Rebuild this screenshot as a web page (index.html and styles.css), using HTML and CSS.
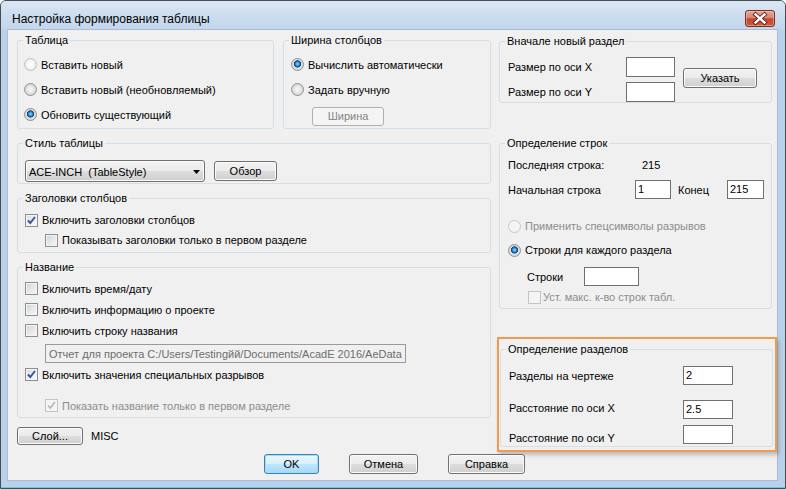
FILE: index.html
```html
<!DOCTYPE html>
<html lang="ru">
<head>
<meta charset="utf-8">
<title>Настройка формирования таблицы</title>
<link rel="stylesheet" href="styles.css">
</head>
<body>
<div class="window">
  <div class="titlebar">
    <span class="title">Настройка формирования таблицы</span>
    <button class="close" aria-label="Закрыть">
      <svg width="30" height="17" viewBox="0 0 30 17">
        <path d="M10.5 4.5 L19.5 12.5 M19.5 4.5 L10.5 12.5" stroke="#5b1f14" stroke-width="4.2" stroke-linecap="square" fill="none"/>
        <path d="M10.5 4.5 L19.5 12.5 M19.5 4.5 L10.5 12.5" stroke="#ffffff" stroke-width="2.4" stroke-linecap="square" fill="none"/>
      </svg>
    </button>
  </div>
  <div class="client">
    <div class="col-left">
      <div class="row-top">
        <fieldset class="grp g-table">
          <legend>Таблица</legend>
          <div class="gb">
            <div class="opt row25"><span class="radio light"></span>Вставить новый</div>
            <div class="opt row25"><span class="radio"></span>Вставить новый (необновляемый)</div>
            <div class="opt row25"><span class="radio on"></span>Обновить существующий</div>
          </div>
        </fieldset>
        <fieldset class="grp g-width">
          <legend>Ширина столбцов</legend>
          <div class="gb">
            <div class="opt row25"><span class="radio on"></span>Вычислить автоматически</div>
            <div class="opt row25"><span class="radio"></span>Задать вручную</div>
            <button class="btn disabled btn-width">Ширина</button>
          </div>
        </fieldset>
      </div>
      <fieldset class="grp g-style">
        <legend>Стиль таблицы</legend>
        <div class="gb style-row">
          <div class="combo"><span class="combo-text">ACE-INCH&nbsp; (TableStyle)</span><svg class="arrow" width="7" height="4" viewBox="0 0 7 4"><polygon points="0,0 7,0 3.5,4" fill="#000"/></svg></div>
          <button class="btn btn-browse">Обзор</button>
        </div>
      </fieldset>
      <fieldset class="grp g-headers">
        <legend>Заголовки столбцов</legend>
        <div class="gb">
          <div class="opt row20"><span class="check on"><svg width="11" height="11" viewBox="0 0 11 11"><path d="M2 5.5 L4.3 8 L9 2" stroke="#3d539a" stroke-width="2" fill="none"/></svg></span>Включить заголовки столбцов</div>
          <div class="opt row20 indent"><span class="check"></span>Показывать заголовки только в первом разделе</div>
        </div>
      </fieldset>
      <fieldset class="grp g-name">
        <legend>Название</legend>
        <div class="gb">
          <div class="opt row21"><span class="check"></span>Включить время/дату</div>
          <div class="opt row21"><span class="check"></span>Включить информацию о проекте</div>
          <div class="opt row21"><span class="check"></span>Включить строку названия</div>
          <div class="field disabled title-field">Отчет для проекта C:/Users/Testingйй/Documents/AcadE 2016/AeData</div>
          <div class="opt row21 after-field"><span class="check on"><svg width="11" height="11" viewBox="0 0 11 11"><path d="M2 5.5 L4.3 8 L9 2" stroke="#3d539a" stroke-width="2" fill="none"/></svg></span>Включить значения специальных разрывов</div>
          <div class="opt row21 indent dim first-only"><span class="check off"><svg width="11" height="11" viewBox="0 0 11 11"><path d="M2 5.5 L4.3 8 L9 2" stroke="#b4b4b4" stroke-width="1.6" fill="none"/></svg></span>Показать название только в первом разделе</div>
        </div>
      </fieldset>
      <div class="layer-row">
        <button class="btn btn-layer">Слой...</button>
        <span class="misc">MISC</span>
      </div>
    </div>

    <div class="col-right">
      <fieldset class="grp g-new">
        <legend>Вначале новый раздел</legend>
        <div class="gb new-row">
          <div class="size-grid">
            <span class="lbl">Размер по оси X</span><span class="field w49"></span>
            <span class="lbl">Размер по оси Y</span><span class="field w49"></span>
          </div>
          <button class="btn btn-pick">Указать</button>
        </div>
      </fieldset>
      <fieldset class="grp g-rows">
        <legend>Определение строк</legend>
        <div class="gb">
          <div class="line last-row"><span class="lbl-last">Последняя строка:</span><span>215</span></div>
          <div class="line start-row"><span class="lbl-start">Начальная строка</span><span class="field w36">1</span><span class="lbl-end">Конец</span><span class="field w37">215</span></div>
          <div class="opt row24 gap-top dim"><span class="radio off"></span>Применить спецсимволы разрывов</div>
          <div class="opt row24"><span class="radio on"></span>Строки для каждого раздела</div>
          <div class="line strings-row"><span class="lbl-strings">Строки</span><span class="field w55"></span></div>
          <div class="opt max-row dim"><span class="check off"></span>Уст. макс. к-во строк табл.</div>
        </div>
      </fieldset>
      <div class="highlight">
        <fieldset class="grp g-sect">
          <legend>Определение разделов</legend>
          <div class="gb">
            <div class="line sect-row r1"><span class="lbl-sect">Разделы на чертеже</span><span class="field w50">2</span></div>
            <div class="line sect-row r2"><span class="lbl-sect up">Расстояние по оси X</span><span class="field w50">2.5</span></div>
            <div class="line sect-row r3"><span class="lbl-sect down">Расстояние по оси Y</span><span class="field w50"></span></div>
          </div>
        </fieldset>
      </div>
    </div>

    <div class="actions">
      <button class="btn default btn-ok">OK</button>
      <button class="btn btn-cancel">Отмена</button>
      <button class="btn btn-help">Справка</button>
    </div>
  </div>
</div>
</body>
</html>
```

FILE: styles.css
```css
* { box-sizing: border-box; }
html, body { margin: 0; padding: 0; }
body {
  width: 786px;
  height: 489px;
  overflow: hidden;
  background: #ffffff;
  font-family: "Liberation Sans", Arial, sans-serif;
  font-size: 11px;
  color: #000;
}

/* ---------- window frame ---------- */
.window {
  width: 786px;
  height: 489px;
  border: 1px solid #474c53;
  border-radius: 6px 6px 0 0;
  background: #b9d1ea;
  padding: 0 8px 8px 7px;
  display: flex;
  flex-direction: column;
  box-shadow: inset 0 -1px 0 #6fc7d6;
}
.titlebar {
  height: 29px;
  margin: 0 -8px 0 -7px;
  padding: 0 10px 0 11px;
  border-radius: 5px 5px 0 0;
  background: linear-gradient(180deg, #dce7f4 0%, #cfdef0 40%, #c2d6ec 100%);
  display: flex;
  align-items: flex-start;
  justify-content: space-between;
}
.title {
  margin-top: 11px;
  font-size: 12px;
  line-height: 14px;
  color: #000;
}
.close {
  margin-top: 9px;
  width: 30px;
  height: 17px;
  padding: 0;
  border: 1px solid #7a2d21;
  border-radius: 3px;
  background: linear-gradient(180deg, #e6a595 0%, #d98474 45%, #c4442d 52%, #cf5d43 100%);
  box-shadow: inset 0 0 0 1px rgba(255, 210, 200, 0.45);
  display: flex;
  align-items: center;
  justify-content: center;
}
.close svg { display: block; margin: -1px; }

.client {
  flex: 1;
  background: #f0f0f0;
  box-shadow: 0 0 0 1px #a9bdd4;
  display: grid;
  grid-template-columns: 474px 273px;
  grid-template-rows: 422px auto;
  column-gap: 8px;
  padding-left: 9px;
  align-content: start;
}

/* ---------- group boxes ---------- */
.grp {
  margin: 0;
  padding: 0;
  min-width: 0;
  border: 1px solid #d5dfe5;
  border-radius: 3px;
}
.grp > legend {
  margin-left: 5px;
  padding: 0 2px;
  font-size: 11px;
  line-height: 14px;
}

.col-left, .col-right { display: flex; flex-direction: column; }

.row-top { display: flex; gap: 9px; margin-top: 3px; }
.g-table { width: 257px; height: 96px; }
.g-table .gb { padding: 5px 0 0 6px; }
.g-width { width: 208px; height: 96px; }
.g-width .gb { padding: 5px 0 0 7px; }
.btn-width { margin: 5px 0 0 21px; width: 72px; height: 19px; display: block; }

.grp.g-style { height: 48px; margin-top: 7px; }
.style-row { display: flex; align-items: center; gap: 9px; padding: 10px 0 0 7px; }

.grp.g-headers { height: 62px; margin-top: 7px; }
.g-headers .gb { padding: 5px 0 0 7px; }

.grp.g-name { height: 158px; margin-top: 7px; }
.g-name .gb { padding: 4px 0 0 7px; }
.title-field { margin: 3px 0 0 20px; width: 361px; height: 20px; }
.after-field { margin-top: 1px; }
.first-only { margin-top: 10px; }

.layer-row { display: flex; align-items: center; margin-top: 9px; }
.btn-layer { width: 66px; height: 18px; }
.misc { margin-left: 8px; }

/* right column */
.grp.g-new { height: 69px; margin-top: 4px; }
.new-row { display: flex; align-items: flex-start; padding: 9px 0 0 8px; }
.size-grid {
  display: grid;
  grid-template-columns: 118px 49px;
  grid-auto-rows: 20px;
  row-gap: 5px;
  align-items: center;
}
.btn-pick { margin: 11px 0 0 8px; width: 74px; height: 20px; }

.grp.g-rows { height: 173px; margin-top: 33px; }
.g-rows .gb { padding: 6px 0 0 8px; }
.line { display: flex; align-items: center; white-space: nowrap; }
.last-row { height: 18px; }
.lbl-last { width: 134px; }
.start-row { height: 19px; margin-top: 6px; }
.lbl-start { width: 127px; }
.lbl-end { width: 49px; margin-left: 7px; }
.gap-top { margin-top: 15px; }
.strings-row { height: 19px; margin-top: 5px; padding-left: 19px; }
.lbl-strings { width: 57px; }
.max-row { height: 18px; margin-top: 2px; padding-left: 20px; }
.max-row .check { margin-right: 2px; }

.highlight {
  margin-top: 28px;
  margin-left: -2px;
  width: 280px;
  height: 115px;
  border: 2px solid #f49a4f;
  padding: 3px 2px 2px 1px;
  box-shadow: 2px 3px 4px rgba(0, 0, 0, 0.22);
}
.grp.g-sect { height: 105px; }
.g-sect .gb { padding: 10px 0 0 8px; }
.sect-row { height: 19px; }
.sect-row.r2 { margin-top: 15px; }
.sect-row.r3 { margin-top: 6px; }
.lbl-sect { width: 174px; }
.lbl-sect.up { margin-bottom: 4px; }
.lbl-sect.down { margin-top: 6px; }

/* bottom buttons */
.actions {
  grid-column: 1 / -1;
  display: flex;
  gap: 30px;
  margin-top: 2px;
  padding-left: 247px;
}
.btn-ok { width: 55px; height: 20px; }
.btn-cancel { width: 69px; height: 20px; }
.btn-help { width: 77px; height: 20px; }

/* ---------- controls ---------- */
.opt { display: flex; align-items: center; white-space: nowrap; }
.row25 { height: 25px; }
.row24 { height: 24px; }
.row21 { height: 21px; }
.row20 { height: 20px; }
.indent { padding-left: 20px; }
.dim { color: #8d8d8d; }

.radio {
  flex: none;
  width: 13px;
  height: 13px;
  margin-right: 4px;
  border-radius: 50%;
  border: 1px solid #8f8f8f;
  background: radial-gradient(circle at 50% 50%, #f8f8f8 0, #e9e9e9 3px, #d7d7d7 5px, #f2f2f2 6px);
}
.radio.light {
  border-color: #c2c2c2;
  background: radial-gradient(circle at 50% 50%, #ffffff 0, #f3f3f3 4px, #e6e6e6 6px);
}
.radio.on {
  background:
    radial-gradient(circle at 50% 45%, #8fd8ff 0, #3fa6e6 1.5px, #1a6bb4 2.5px, #0b3d78 3.3px, rgba(11, 61, 120, 0) 3.9px),
    radial-gradient(circle at 50% 50%, #f8f8f8 0, #e9e9e9 3px, #d7d7d7 5px, #f2f2f2 6px);
}
.radio.off {
  border-color: #c8c8c8;
  background: #f4f4f4;
}

.check {
  flex: none;
  width: 13px;
  height: 13px;
  margin-right: 4px;
  border: 1px solid #8e8f8f;
  background: linear-gradient(135deg, #cfd2d7 0%, #e6e7e9 50%, #f8f8f8 100%);
  box-shadow: inset 0 0 0 1px #f4f4f4;
  display: flex;
  align-items: center;
  justify-content: center;
}
.check.on { background: linear-gradient(135deg, #d6dbe3 0%, #eef0f4 60%, #fafafa 100%); }
.check.off {
  border-color: #c4c4c4;
  background: #f4f4f4;
  box-shadow: none;
}
.check svg { display: block; }

.field {
  display: block;
  height: 19px;
  border: 1px solid #707070;
  background: #fff;
  padding: 0 0 0 2px;
  line-height: 17px;
  font-size: 11px;
  white-space: nowrap;
  overflow: hidden;
}
.field.disabled {
  background: #f0f0f0;
  border-color: #9a9a9a;
  color: #6d6d6d;
  line-height: 18px;
  padding-left: 3px;
}
.w36 { width: 36px; }
.w37 { width: 37px; }
.w49 { width: 49px; height: 20px; }
.w50 { width: 50px; }
.w55 { width: 55px; }

.btn {
  font-family: "Liberation Sans", Arial, sans-serif;
  font-size: 11px;
  color: #000;
  padding: 0;
  border: 1px solid #707070;
  border-radius: 3px;
  background: linear-gradient(180deg, #f2f2f2 0%, #ebebeb 48%, #dddddd 52%, #cfcfcf 100%);
  box-shadow: inset 0 0 0 1px #fbfbfb;
  line-height: 1;
}
.btn.default {
  border-color: #3c7fb1;
  background: linear-gradient(180deg, #eaf6fd 0%, #d9f0fc 48%, #bee6fd 52%, #a7d9f5 100%);
  box-shadow: inset 0 0 0 1px #a4dcf6;
}
.btn.disabled {
  border-color: #adb2b5;
  background: #f4f4f4;
  box-shadow: none;
  color: #838383;
}
.btn-browse { width: 63px; height: 20px; }

.combo {
  width: 180px;
  height: 22px;
  border: 1px solid #707070;
  border-radius: 3px;
  background: linear-gradient(180deg, #f2f2f2 0%, #ebebeb 48%, #dddddd 52%, #cfcfcf 100%);
  box-shadow: inset 0 0 0 1px #fbfbfb;
  display: flex;
  align-items: center;
  padding: 1px 4px 0 3px;
}
.combo-text { flex: 1; white-space: nowrap; }
.arrow { display: block; flex: none; }
```
